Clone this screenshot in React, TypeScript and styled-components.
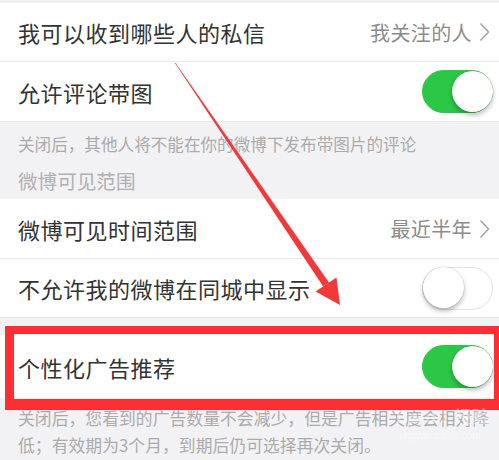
import styled, { createGlobalStyle } from "styled-components"

const GlobalStyle = createGlobalStyle`
   html, body {
      margin: 0;
      padding: 0;
      background: #f2f2f4;
   }
   body {
      font-family: "Noto Sans CJK SC", "Noto Sans", sans-serif;
   }
`

type ToggleProps = {
   on?: boolean,
}

const Toggle = ({ on }: ToggleProps) => (
   <Track $on={!!on}>
      <Knob $on={!!on} />
   </Track>
)

const Chevron = () => (
   <svg width="11" height="20" viewBox="0 0 11 20">
      <polyline points="1.5,1.5 9.5,10 1.5,18.5" fill="none" stroke="#a0a0a0" strokeWidth="1.4" />
   </svg>
)

const Arrow = () => (
   <ArrowLayer width="499" height="460" viewBox="0 0 499 460">
      <polygon
         points="174.5,62.5 175.7,63.3 329,282.4 323.2,286.4"
         fill="#f2383b"
      />
      <polygon points="340,305 315.5,291.5 336.5,277.5" fill="#f2383b" />
   </ArrowLayer>
)

export default function App() {
   return (
      <Screen>
         <GlobalStyle />
         <TopStrip />
         <Row $height={59}>
            <Label>我可以收到哪些人的私信</Label>
            <Value>
               我关注的人
               <Chevron />
            </Value>
         </Row>
         <Row $height={60}>
            <Label>允许评论带图</Label>
            <Toggle on />
         </Row>
         <GraySection>
            <Note>关闭后，其他人将不能在你的微博下发布带图片的评论</Note>
            <SectionTitle>微博可见范围</SectionTitle>
         </GraySection>
         <Row $height={60}>
            <Label>微博可见时间范围</Label>
            <Value>
               最近半年
               <Chevron />
            </Value>
         </Row>
         <Row $height={59}>
            <Label>不允许我的微博在同城中显示</Label>
            <Toggle />
         </Row>
         <Gap />
         <Highlighted>
            <Row $height={63} $noBorder>
               <Label>个性化广告推荐</Label>
               <Toggle on />
            </Row>
            <Frame />
         </Highlighted>
         <FooterNote>
            关闭后，您看到的广告数量不会减少，但是广告相关度会相对降低；有效期为3个月，到期后仍可选择再次关闭。
         </FooterNote>
         <Watermark>
            <WatermarkLogo>Baidu 经验</WatermarkLogo>
            <WatermarkUrl>jingyan.baidu.com</WatermarkUrl>
         </Watermark>
         <Arrow />
      </Screen>
   )
}

const Screen = styled.div`
   position: relative;
   width: 499px;
   height: 460px;
   overflow: hidden;
   background: #f2f2f4;
   display: flex;
   flex-direction: column;
`

const TopStrip = styled.div`
   height: 3px;
   flex-shrink: 0;
   background: #f0f0f2;
`

const Row = styled.div<{ $height: number, $noBorder?: boolean }>`
   height: ${({ $height }) => $height}px;
   flex-shrink: 0;
   box-sizing: border-box;
   display: flex;
   align-items: center;
   justify-content: space-between;
   padding: 0 6px 0 18px;
   background: #ffffff;
   border-bottom: ${({ $noBorder }) => $noBorder ? "none" : "1px solid #e6e6e8"};
`

const Label = styled.span`
   font-size: 22px;
   color: #333333;
   letter-spacing: 0.5px;
   white-space: nowrap;
`

const Value = styled.span`
   display: flex;
   align-items: center;
   gap: 7px;
   padding-right: 3px;
   font-size: 20px;
   color: #8c8c8c;
   letter-spacing: 0.4px;
`

const Track = styled.div<{ $on: boolean }>`
   position: relative;
   width: 71px;
   height: 43px;
   box-sizing: border-box;
   border-radius: 22px;
   background: ${({ $on }) => $on ? "#2bc847" : "#ffffff"};
   border: 1.5px solid ${({ $on }) => $on ? "#2bc847" : "#e2e2e2"};
   flex-shrink: 0;
`

const Knob = styled.div<{ $on: boolean }>`
   position: absolute;
   top: -0.5px;
   ${({ $on }) => $on ? "right: -0.5px;" : "left: -0.5px;"}
   width: 41px;
   height: 41px;
   border-radius: 50%;
   background: #ffffff;
   box-shadow: 0 3px 5px rgba(0, 0, 0, 0.28), 0 0 0 0.5px rgba(0, 0, 0, 0.12);
`

const GraySection = styled.div`
   height: 77px;
   flex-shrink: 0;
   box-sizing: border-box;
   padding: 10px 18px 0;
   display: flex;
   flex-direction: column;
   gap: 12px;
`

const Note = styled.div`
   font-size: 16.6px;
   line-height: 24px;
   color: #ababab;
   white-space: nowrap;
`

const SectionTitle = styled.div`
   font-size: 19.6px;
   line-height: 26px;
   color: #b0b0b0;
`

const Gap = styled.div`
   height: 17px;
   flex-shrink: 0;
`

const Highlighted = styled.div`
   position: relative;
   flex-shrink: 0;
`

const Frame = styled.div`
   position: absolute;
   top: -9px;
   bottom: -12px;
   left: 5px;
   right: -4px;
   border: 9px solid #fc2f35;
   border-top-width: 8px;
   border-bottom-width: 11px;
   pointer-events: none;
`

const FooterNote = styled.div`
   padding: 7px 6px 0 18px;
   font-size: 16.8px;
   line-height: 27px;
   color: #ababab;
   letter-spacing: 0.05px;
`

const Watermark = styled.div`
   position: absolute;
   left: 396px;
   top: 408px;
   display: flex;
   flex-direction: column;
   align-items: flex-start;
   color: rgba(255, 255, 255, 0.4);
   font-family: "Liberation Sans", "Noto Sans CJK SC", sans-serif;
   pointer-events: none;
`

const WatermarkLogo = styled.div`
   font-size: 17px;
   font-weight: bold;
   line-height: 19px;
   letter-spacing: 1px;
`

const WatermarkUrl = styled.div`
   font-size: 10px;
   margin-top: 3px;
   margin-left: 4px;
`

const ArrowLayer = styled.svg`
   position: absolute;
   top: 0;
   left: 0;
   pointer-events: none;
`
